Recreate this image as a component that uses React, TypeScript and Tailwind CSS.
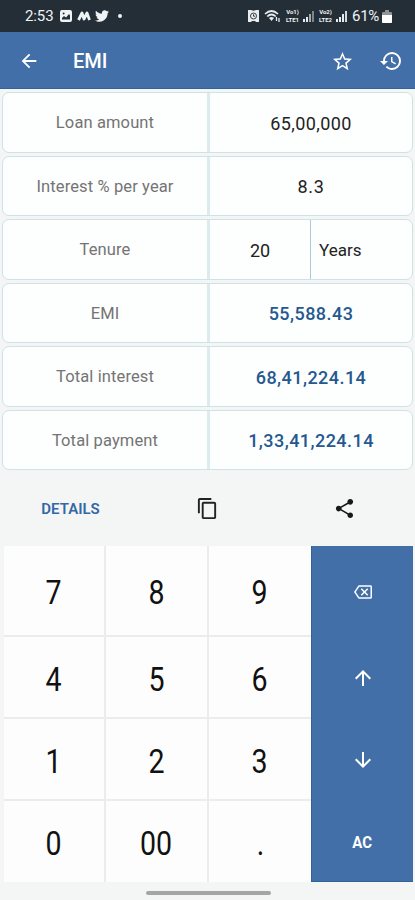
import type { ReactNode } from "react";
import clsx from "clsx";
import {
    MdArrowBack,
    MdArrowDownward,
    MdArrowUpward,
    MdContentCopy,
    MdHistory,
    MdOutlineBackspace,
    MdShare,
    MdStarBorder,
} from "react-icons/md";
import { FaTwitter } from "react-icons/fa";

const results = [
    { label: "EMI", value: "55,588.43" },
    { label: "Total interest", value: "68,41,224.14" },
    { label: "Total payment", value: "1,33,41,224.14" },
];

const keys = ["7", "8", "9", "4", "5", "6", "1", "2", "3", "0", "00", "."];

const Signal = ({ strong = false }: { strong?: boolean }) => (
    <svg width="12" height="12" viewBox="0 0 12 12" fill="#e8ecee">
        <rect x="0" y="9" width="2" height="3" />
        <rect x="3" y="7" width="2" height="5" />
        <rect x="6" y="4" width="2" height="8" opacity={strong ? 1 : 0.65} />
        <rect x="9" y="1" width="2" height="11" opacity={strong ? 0.9 : 0.45} />
    </svg>
);

const Volte = ({ sim }: { sim: string }) => (
    <div className="flex w-[15px] flex-col items-center text-[6px] leading-[8px] font-bold">
        <span>Vo{sim})</span>
        <span>LTE{sim}</span>
    </div>
);

const StatusBar = () => (
    <div className="flex h-8 items-center justify-between bg-[#242e37] pl-[25px] pr-[23px] text-[#f0f3f5]">
        <div className="flex items-center">
            <span className="w-[34px] text-[15px] tracking-[-0.1px]">2:53</span>
            <svg className="ml-px" width="12" height="12" viewBox="0 0 12 12">
                <rect width="12" height="12" rx="2" fill="#f0f3f5" />
                <path d="M2 9.5V8l2-2 2 1.5L9 4l1 1.5v4z" fill="#242e37" />
                <circle cx="3.6" cy="3.6" r="1" fill="#242e37" />
            </svg>
            <svg className="ml-[5px]" width="14" height="10" viewBox="0 0 14 10" fill="none" stroke="#f0f3f5" strokeWidth="2.8">
                <path d="M1.5 9L5 2l2 6 3-6 2.5 7" strokeLinejoin="round" />
            </svg>
            <FaTwitter className="ml-[4px] size-[14px]" />
            <span className="ml-[9px] size-1 rounded-full bg-[#f0f3f5]" />
        </div>
        <div className="flex items-center">
            <svg width="11" height="12" viewBox="0 0 11 12">
                <path d="M0 0h3l2.5.8L8 0h3v12H8l-1-1H4l-1 1H0z" fill="#e8ecee" />
                <circle cx="5.5" cy="6" r="3" fill="none" stroke="#242e37" strokeWidth="0.9" />
                <path d="M5.5 4.2V6.2H7" fill="none" stroke="#242e37" strokeWidth="0.9" />
            </svg>
            <svg className="ml-[5px]" width="17" height="14" viewBox="0 0 17 14" fill="none" stroke="#e8ecee" strokeWidth="1.7">
                <path d="M1 5Q7.5 -1 14 5M3.2 7.500Q7.5 3.5 11.8 7.5" />
                <path d="M5 9l2.5 3L10 9Q7.5 7 5 9z" fill="#e8ecee" stroke="none" />
                <path d="M12.5 8v4M15 9v4" strokeWidth="1.3" />
            </svg>
            <div className="ml-[4px] flex items-center gap-[3px]">
                <Volte sim="1" />
                <Signal />
                <Volte sim="2" />
                <Signal strong />
            </div>
            <span className="ml-[4px] w-[29px] text-[15px] tracking-[-0.3px]">61%</span>
            <svg className="ml-px" width="10" height="13" viewBox="0 0 10 13">
                <path d="M3 0h4v2h2a1 1 0 0 1 1 1v9a1 1 0 0 1-1 1H1a1 1 0 0 1-1-1V3a1 1 0 0 1 1-1h2z" fill="#8e969c" />
                <path d="M0 5h10v7a1 1 0 0 1-1 1H1a1 1 0 0 1-1-1z" fill="#fff" />
            </svg>
        </div>
    </div>
);

const Row = ({ label, children }: { label: string; children: ReactNode }) => (
    <div className="flex h-[60.5px] overflow-hidden rounded-[7px] border border-[#cfe2e6] bg-[#fdfefe] text-[18px]">
        <div className="flex w-[207px] items-center justify-center border-r-[3px] border-[#dcebed] pt-[3px] text-[16.5px] tracking-[0.12px] text-[#747474]">
            {label}
        </div>
        <div className="flex flex-1 items-center text-[#222]">{children}</div>
    </div>
);

export default function App() {
    return (
        <div className="flex h-[900px] w-[415px] flex-col overflow-hidden bg-[#f4f5f5] font-['Roboto',sans-serif]">
            <StatusBar />

            <header className="flex h-[57px] items-center border-b border-[#2e6498] bg-[#426fa7] pt-[2px] text-white">
                <MdArrowBack className="ml-[18px] size-[22px]" />
                <h1 className="ml-[33px] flex-1 text-[20px] font-medium">EMI</h1>
                <MdStarBorder className="mr-[25px] size-[23px]" />
                <MdHistory className="mr-[12px] size-[24px]" />
            </header>

            <div className="flex flex-col gap-[3px] px-[2px] pt-[3px]">
                <Row label="Loan amount">
                    <span className="flex-1 pt-[2px] text-center tracking-[0.4px]">65,00,000</span>
                </Row>
                <Row label="Interest % per year">
                    <span className="flex-1 pt-[2px] text-center tracking-[0.6px]">8.3</span>
                </Row>
                <Row label="Tenure">
                    <span className="flex h-full w-[101px] items-center justify-center border-r border-[#a9cbd6] pt-[2px]">
                        20
                    </span>
                    <span className="pt-[2px] pl-[8px] text-[17px]">Years</span>
                </Row>
                {results.map(({ label, value }) => (
                    <Row key={label} label={label}>
                        <span className="flex-1 pt-[2px] text-center font-medium tracking-[0.45px] text-[#24588f]">{value}</span>
                    </Row>
                ))}
            </div>

            <div className="grid h-[76px] shrink-0 grid-cols-3 items-center justify-items-center px-[2px]">
                <button className="pt-[2px] text-[15px] font-semibold text-[#3268a6]">DETAILS</button>
                <MdContentCopy className="size-[23px] text-[#222]" />
                <MdShare className="size-[23px] text-[#181818]" />
            </div>

            {/* Keypad */}
            <div className="ml-[4px] flex h-[336px] w-[409px] shrink-0">
                <div className="grid w-[307px] grid-cols-[102px_103px_102px] grid-rows-[91px_82px_82px_81px] bg-[#fdfdfd]">
                    {keys.map((key, i) => (
                        <button
                            key={key}
                            className={clsx(
                                "flex items-center justify-center border-[#ececec] pt-[4px] text-[34px] text-[#111]",
                                i % 3 < 2 && "border-r-2",
                                i < 9 && "border-b-2",
                            )}
                        >
                            <span className="scale-x-[0.84]">{key}</span>
                        </button>
                    ))}
                </div>
                <div className="grid flex-1 grid-rows-[91px_82px_82px_81px] place-items-center border-b border-l border-b-[#2e6498] border-l-[#2e6498] bg-[#426fa7] text-white">
                    <MdOutlineBackspace className="size-[18px]" />
                    <MdArrowUpward className="size-[24px]" />
                    <MdArrowDownward className="size-[24px]" />
                    <span className="scale-x-[0.88] pt-[2px] text-[17px] font-bold">AC</span>
                </div>
            </div>

            <div className="mt-[9px] ml-[146px] h-1 w-[125px] rounded-full bg-[#a5a5a5]" />
        </div>
    );
}
